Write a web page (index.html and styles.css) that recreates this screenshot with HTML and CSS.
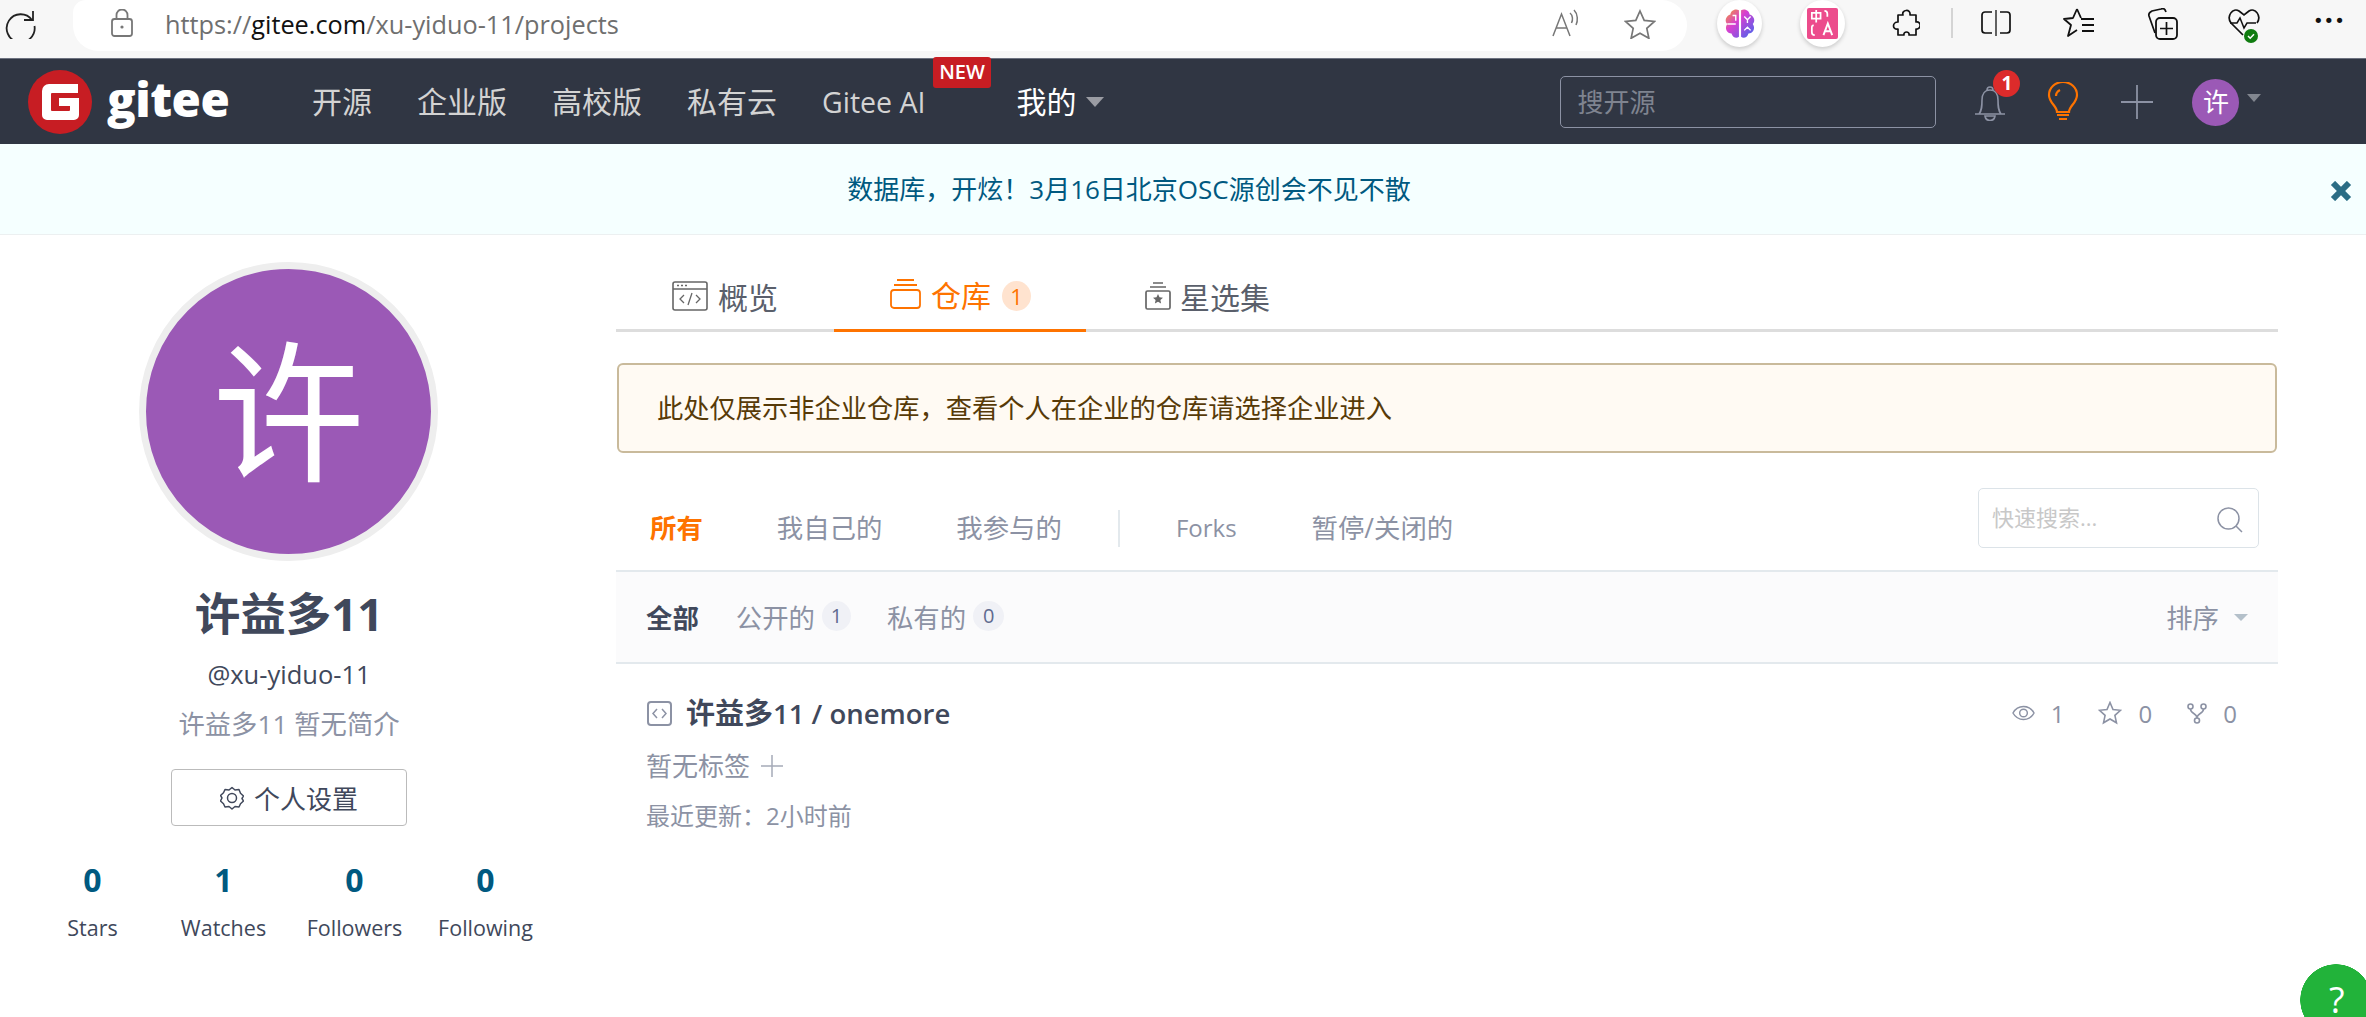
FILE: index.html
```html
<!DOCTYPE html>
<html lang="zh">
<head>
<meta charset="utf-8">
<title>gitee</title>
<link rel="stylesheet" href="styles.css">
</head>
<body>
<div class="chrome">
  <svg class="ci reload" viewBox="0 0 32 32"><path d="M28 4v9h-9M27 13A14 14 0 1 0 29.500 19" fill="none" stroke="#222" stroke-width="1.800"/></svg>
  <div class="urlbar">
    <svg class="lock" viewBox="0 0 22 28"><rect x="1" y="10" width="20" height="17" rx="2.5" fill="none" stroke="#777" stroke-width="1.8"/><path d="M5.500 10V6a5.500 5.500 0 0 1 11 0v4" fill="none" stroke="#777" stroke-width="1.800"/><circle cx="11" cy="18" r="1.600" fill="#777"/></svg>
    <div class="url">https://<b>gitee.com</b>/xu-yiduo-11/projects</div>
    <svg class="ci aloud" viewBox="0 0 30 28"><path d="M1 27 9.500 5 18 27M4.500 19h10M18 4c3 2.500 3 7 1.500 10M22 1c4 4 4 11 2 15" fill="none" stroke="#777" stroke-width="1.500"/></svg>
    <svg class="ci favstar" viewBox="0 0 32 30"><path d="M16 2l4.200 9.400 10.200 1.100-7.600 6.800 2.100 10-8.900-5.100-8.900 5.100 2.100-10-7.600-6.800 10.200-1.100z" fill="none" stroke="#777" stroke-width="1.700"/></svg>
  </div>
  <div class="ext-circle first">
    <svg viewBox="0 0 32 32" class="ext"><defs><linearGradient id="br" x1="0" y1="0" x2="1" y2="1"><stop offset="0" stop-color="#f59b30"/><stop offset=".4" stop-color="#d83fd0"/><stop offset="1" stop-color="#3f68f0"/></linearGradient></defs><path d="M15 3c-4-2-8 1-8 4-4 1-6 6-3 9-3 4 0 9 4 9 1 4 5 5 7 3zM17 3c4-2 8 1 8 4 4 1 6 6 3 9 3 4 0 9-4 9-1 4-5 5-7 3z" fill="url(#br)"/><path d="M4 16h8M20 9l3 3 3-3M23 12v3M20 22l3-3 3 3M9 8h3v5" fill="none" stroke="#fff" stroke-width="1.300"/></svg>
  </div>
  <div class="ext-circle second">
    <svg viewBox="0 0 32 32" class="ext"><rect width="32" height="32" rx="2" fill="#ec4c8c"/><path d="M5 5h9v6H5zM9.500 2v13M7 18c-2 0-2 1-2 3v4c0 2 1 3 3 3M18 3c2 0 3 1 3 3v3" fill="none" stroke="#fff" stroke-width="1.800"/><path d="M17 28l4.500-12L26 28M18.500 24h6" fill="none" stroke="#fff" stroke-width="2"/></svg>
  </div>
  <svg class="ci puzzle" viewBox="0 0 28 30"><path d="M6 7h5c-2-5 8-7 7 0h6v7c6-1 5 8 0 7v6h-7c1-4-6-4-5 0H6v-6c-6 1-6-7 0-7z" fill="none" stroke="#111" stroke-width="1.700" stroke-linejoin="round"/></svg>
  <span class="sep"></span>
  <svg class="ci split" viewBox="0 0 30 26"><path d="M11 2H4a3 3 0 0 0-3 3v15a3 3 0 0 0 3 3h7M19 2h7a3 3 0 0 1 3 3v15a3 3 0 0 1-3 3h-7" fill="none" stroke="#111" stroke-width="1.700"/><path d="M15 0v26" stroke="#111" stroke-width="1.300"/></svg>
  <svg class="ci favs" viewBox="0 0 32 30"><path d="M14 1l4 9h-0M14 1l-4 9-9 1 7 6-3 11 9-6" fill="none" stroke="#111" stroke-width="1.800" stroke-linejoin="round"/><path d="M18 11h13M19 17h12M19 23h12" stroke="#111" stroke-width="1.800"/></svg>
  <svg class="ci coll" viewBox="0 0 32 32"><path d="M9 25 3 8c-1-3 1-4 3-5l9-2c3-1 4 0 5 3" fill="none" stroke="#111" stroke-width="1.700"/><rect x="10" y="10" width="21" height="21" rx="4" fill="none" stroke="#111" stroke-width="1.800"/><path d="M20.500 14v13M14 20.500h13" stroke="#111" stroke-width="1.700"/></svg>
  <svg class="ci heart" viewBox="0 0 32 36"><path d="M15 27 3 15C-2 8 5-1 11 3l5 4 5-4c6-4 13 5 8 12" fill="none" stroke="#111" stroke-width="1.700"/><path d="M2 15h7l3-5 4 10 3-5h9" fill="none" stroke="#111" stroke-width="1.500"/><circle cx="23" cy="28" r="7" fill="#107c10"/><path d="M20 28l2.200 2.200 3.800-4" fill="none" stroke="#fff" stroke-width="1.500"/></svg>
  <div class="dots">&#8226;&#8226;&#8226;</div>
</div>

<header class="nav">
  <svg class="logo-mark" viewBox="0 0 64 64"><circle cx="32" cy="32" r="32" fill="#c71d23"/><path d="M14 21a7 7 0 0 1 7-7h29v9H24a1 1 0 0 0-1 1v16a1 1 0 0 0 1 1h17a1 1 0 0 0 1-1v-4H31v-8h20v17a5 5 0 0 1-5 5H19a5 5 0 0 1-5-5z" fill="#fff"/></svg>
  <span class="logo-text">gitee</span>
  <nav class="links">
    <a>开源</a>
    <a>企业版</a>
    <a>高校版</a>
    <a>私有云</a>
    <a class="ai">Gitee AI<span class="new">NEW</span></a>
    <a class="mine">我的<i class="caret"></i></a>
  </nav>
  <div class="nav-search">搜开源</div>
  <div class="bell">
    <svg viewBox="0 0 32 38"><path d="M1 31h30M5 31c3-4 3-8 3-14 0-6 3-10 8-10s8 4 8 10c0 6 0 10 3 14M13 7c0-4 6-4 6 0M11 33c1 6 9 6 10 0z" fill="none" stroke="#8c92a4" stroke-width="1.600"/></svg>
    <span class="bell-badge">1</span>
  </div>
  <svg class="bulb" viewBox="0 0 32 40"><path d="M10 30c0-6-8-9-8-17a14 13 0 0 1 28 0c0 8-8 11-8 17z" fill="none" stroke="#fe7300" stroke-width="2.200"/><path d="M9 14c0-3 2-5 4-6M10 33h12M12 37h8" fill="none" stroke="#fe7300" stroke-width="2.200"/></svg>
  <svg class="nav-plus" viewBox="0 0 32 34"><path d="M0 17h32M16 0v34" stroke="#8c92a4" stroke-width="1.800"/></svg>
  <div class="nav-avatar">许</div>
  <i class="caret small"></i>
</header>

<div class="banner">
  <span class="banner-text">数据库，开炫！3月16日北京OSC源创会不见不散</span>
  <svg class="banner-close" viewBox="0 0 24 20"><path d="M4 2l16 16M20 2 4 18" stroke="#2b6d85" stroke-width="6"/></svg>
</div>

<div class="page">
  <aside class="side">
    <div class="avatar">许</div>
    <h1 class="name">许益多11</h1>
    <div class="handle">@xu-yiduo-11</div>
    <div class="bio">许益多11 暂无简介</div>
    <button class="settings">
      <svg viewBox="0 0 24 24"><path d="M12 1.500l3 2.500 4-.5 1.500 3.700 3 2.800-1.500 2.500 1.500 2.500-3 2.800-1.500 3.200-4-.5-3 2.500-3-2.500-4 .5-1.500-3.200-3-2.800L2 12 .5 9.500l3-2.800L5 3.500l4 .5z" fill="none" stroke="#40485b" stroke-width="1.500" stroke-linejoin="round"/><circle cx="12" cy="12" r="4.500" fill="none" stroke="#40485b" stroke-width="1.500"/></svg>
      个人设置
    </button>
    <div class="stats">
      <div class="stat"><b>0</b><span>Stars</span></div>
      <div class="stat"><b>1</b><span>Watches</span></div>
      <div class="stat"><b>0</b><span>Followers</span></div>
      <div class="stat"><b>0</b><span>Following</span></div>
    </div>
  </aside>

  <main class="main">
    <div class="tabs">
      <a class="tab t1">
        <svg class="ti1" viewBox="0 0 36 30"><rect x="1" y="1" width="34" height="28" rx="2" fill="none" stroke="#666" stroke-width="1.600"/><path d="M1 8h34" stroke="#666" stroke-width="1.400"/><path d="M5 4.500h2M9 4.500h2M13 4.500h2" stroke="#666" stroke-width="1.600"/><path d="M12 14l-4 4 4 4M24 14l4 4-4 4M20 12l-4 12" fill="none" stroke="#666" stroke-width="1.300"/></svg>
        概览
      </a>
      <a class="tab t2 active">
        <svg class="ti2" viewBox="0 0 31 30"><path d="M7 1h17M4 6h23" stroke="#fe7300" stroke-width="1.800"/><rect x="1" y="11" width="29" height="18" rx="3" fill="none" stroke="#fe7300" stroke-width="1.800"/></svg>
        仓库
        <span class="tab-badge">1</span>
      </a>
      <a class="tab t3">
        <svg class="ti3" viewBox="0 0 26 28"><path d="M8 1h10M5 5h16" stroke="#666" stroke-width="1.600"/><rect x="1" y="9" width="24" height="18" rx="1.500" fill="none" stroke="#666" stroke-width="1.700"/><path d="M13 12l1.500 3.300 3.500.4-2.600 2.400.7 3.500-3.100-1.800-3.100 1.800.7-3.500L8 15.700l3.500-.4z" fill="#666"/></svg>
        星选集
      </a>
    </div>

    <div class="notice">此处仅展示非企业仓库，查看个人在企业的仓库请选择企业进入</div>

    <div class="subnav">
      <div class="sublinks">
        <a class="on">所有</a>
        <a>我自己的</a>
        <a>我参与的</a>
        <span class="divider"></span>
        <a class="forks">Forks</a>
        <a>暂停/关闭的</a>
      </div>
      <div class="quick">
        <span>快速搜索...</span>
        <svg viewBox="0 0 26 26"><circle cx="11.500" cy="11.500" r="10.500" fill="none" stroke="#8c92a4" stroke-width="1.500"/><path d="M19 19l6 6" stroke="#8c92a4" stroke-width="1.500"/></svg>
      </div>
    </div>

    <div class="bar">
      <a class="all">全部</a>
      <a class="filter">公开的<span class="pill">1</span></a>
      <a class="filter">私有的<span class="pill wide">0</span></a>
      <div class="sort">排序<i class="sort-caret"></i></div>
    </div>

    <article class="repo">
      <div class="repo-head">
        <svg class="repo-icon" viewBox="0 0 25 25"><rect x="1" y="1" width="23" height="23" rx="3" fill="none" stroke="#8c92a4" stroke-width="2"/><path d="M10 8l-4 4.500 4 4.500M15 8l4 4.500-4 4.500" fill="none" stroke="#8c92a4" stroke-width="1.500"/></svg>
        <h2 class="repo-name"><b>许益多</b>11 / onemore</h2>
        <div class="repo-stats">
          <svg class="rs-eye" viewBox="0 0 24 16"><path d="M1 8c5-9 17-9 22 0-5 9-17 9-22 0z" fill="none" stroke="#8c92a4" stroke-width="1.500"/><circle cx="12" cy="8" r="4" fill="none" stroke="#8c92a4" stroke-width="1.500"/></svg>
          <span class="rs-n1">1</span>
          <svg class="rs-star" viewBox="0 0 24 24"><path d="M12 1.500l3 7 7.500.8-5.600 5 1.600 7.500-6.500-3.800-6.500 3.800 1.600-7.500-5.600-5 7.500-.8z" fill="none" stroke="#8c92a4" stroke-width="1.600"/></svg>
          <span class="rs-n2">0</span>
          <svg class="rs-fork" viewBox="0 0 20 21"><circle cx="3.500" cy="3.500" r="2.500" fill="none" stroke="#8c92a4" stroke-width="1.600"/><circle cx="16.500" cy="3.500" r="2.500" fill="none" stroke="#8c92a4" stroke-width="1.600"/><circle cx="10" cy="17.500" r="2.500" fill="none" stroke="#8c92a4" stroke-width="1.600"/><path d="M3.500 6c0 5 6.500 4 6.500 9M16.500 6c0 5-6.500 4-6.500 9" fill="none" stroke="#8c92a4" stroke-width="1.600"/></svg>
          <span class="rs-n3">0</span>
        </div>
      </div>
      <div class="repo-tags">暂无标签<svg viewBox="0 0 22 22"><path d="M0 11h22M11 0v22" stroke="#a5aab8" stroke-width="1.500"/></svg></div>
      <div class="repo-time">最近更新：2小时前</div>
    </article>
  </main>
</div>

<div class="help"><span class="help-mark">?</span></div>
</body>
</html>
```

FILE: styles.css
```css
* { box-sizing: border-box; }
html, body { margin: 0; padding: 0; height: 1017px; overflow: hidden; background: #fff; }
body { position: relative; font-family: "Open Sans", "Noto Sans CJK SC", sans-serif; color: #40485b; }
a { display: block; }
h1, h2 { margin: 0; }
svg { display: block; flex: none; }

/* browser toolbar */
.chrome { height: 58px; background: #f7f7f7; display: flex; align-items: flex-start; position: relative; }
.ci { position: relative; }
.reload { width: 32px; height: 32px; margin: 7px 0 0 5px; }
.urlbar { margin-left: 36px; width: 1614px; height: 51px; background: #fff; border-radius: 14px 28px 28px 28px; display: flex; align-items: center; padding-left: 38px; }
.lock { width: 22px; height: 28px; margin-top: -6px; }
.url { margin-left: 32px; margin-top: -3px; font-size: 25.3px; line-height: 34px; color: #6f6f6f; width: 1000px; white-space: nowrap; }
.url b { font-weight: 400; color: #111; }
.aloud { width: 30px; height: 28px; margin-left: 387px; margin-top: -6px; }
.favstar { width: 32px; height: 30px; margin-left: 42px; margin-top: -4px; }
.ext-circle { width: 45px; height: 47px; background: #fff; border-radius: 50%; box-shadow: 0 2px 4px rgba(0,0,0,.18); display: flex; align-items: center; justify-content: center; margin-top: 0; }
.ext-circle.first { margin-left: 30px; }
.ext-circle.second { margin-left: 38px; }
.ext { width: 31px; height: 31px; }
.first .ext { width: 34px; height: 34px; }
.puzzle { width: 28px; height: 30px; margin: 8px 0 0 47px; }
.sep { width: 2px; height: 30px; background: #d4d4d4; margin: 8px 0 0 31px; }
.split { width: 30px; height: 26px; margin: 10px 0 0 28px; }
.favs { width: 32px; height: 30px; margin: 8px 0 0 52px; }
.coll { width: 32px; height: 32px; margin: 8px 0 0 51px; }
.heart { width: 32px; height: 36px; margin: 8px 0 0 50px; }
.dots { margin: 6px 0 0 53px; font-size: 18px; line-height: 30px; letter-spacing: 0; color: #111; font-family: "DejaVu Sans", sans-serif; width: 30px; white-space: nowrap; }

/* site navigation */
.nav { height: 86px; background: #303643; border-top: 1px solid #6d7280; display: flex; align-items: center; padding-left: 28px; }
.logo-mark { width: 64px; height: 64px; }
.logo-text { margin-left: 15px; font-size: 47.5px; line-height: 60px; font-weight: 800; color: #fff; font-family: "Open Sans", sans-serif; letter-spacing: -.5px; margin-top: -6px; width: 124px; }
.links { display: flex; align-items: center; margin-left: 81px; gap: 45px; font-size: 30px; line-height: 40px; color: #d3d3d3; margin-top: 1px; }
.ai { position: relative; font-size: 28.5px; margin-right: 46px; white-space: nowrap; }
.new { position: absolute; left: 111px; top: -25px; width: 58px; height: 31px; background: #c71d23; color: #fff; font-size: 20px; line-height: 30px; font-weight: 600; text-align: center; border-radius: 3px; }
.mine { color: #fff; display: flex; align-items: center; }
.caret { display: block; width: 0; height: 0; border-left: 9px solid transparent; border-right: 9px solid transparent; border-top: 10px solid #9a9ca3; margin-left: 10px; }
.links a:not(.mine):not(.ai) { white-space: nowrap; }
.nav-search { margin-left: 456px; width: 376px; height: 52px; border: 1px solid #8c92a4; border-radius: 5px; font-size: 26px; line-height: 50px; padding-left: 16px; color: #7f8490; margin-top: 1px; }
.bell { position: relative; width: 32px; height: 38px; margin-left: 38px; }
.bell svg { width: 32px; height: 38px; }
.bell-badge { position: absolute; left: 19px; top: -13px; width: 27px; height: 27px; border-radius: 50%; background: #dc2b2b; color: #fff; font-size: 19px; line-height: 27px; font-weight: 700; text-align: center; }
.bulb { width: 32px; height: 40px; margin-left: 41px; }
.nav-plus { width: 32px; height: 34px; margin-left: 42px; }
.nav-avatar { width: 47px; height: 47px; border-radius: 50%; background: #9b59b6; color: #fff; font-size: 26px; line-height: 46px; text-align: center; margin-left: 39px; margin-top: 2px; }
.caret.small { border-left-width: 7px; border-right-width: 7px; border-top-width: 8px; margin-left: 8px; margin-top: -7px; border-top-color: #81868f; }

/* announcement */
.banner { height: 91px; background: #f5ffff; border-bottom: 1px solid #ecf0f1; display: flex; align-items: center; justify-content: center; position: relative; padding-right: 108px; }
.banner-text { font-size: 26px; color: #005980; line-height: 36px; }
.banner-close { position: absolute; right: 13px; top: 37px; width: 24px; height: 20px; }

/* page */
.page { display: flex; padding: 0 88px 0 27px; }
.side { width: 524px; padding-top: 27px; display: flex; flex-direction: column; align-items: center; }
.avatar { width: 299px; height: 299px; border-radius: 50%; background: #9b59b6; border: 7px solid #eee; color: #fff; font-size: 152px; line-height: 285px; text-align: center; margin-left: -1px; }
.name { margin-top: 22px; font-size: 45.5px; line-height: 60px; font-weight: 700; color: #40485b; }
.handle { margin-top: 13px; font-size: 25.5px; line-height: 36px; color: #40485b; }
.bio { margin-top: 14px; font-size: 26.3px; line-height: 36px; color: #8c92a4; }
.settings { margin-top: 27px; width: 236px; height: 57px; background: #fff; border: 1px solid #bbb; border-radius: 4px; font: inherit; font-size: 26px; color: #40485b; display: flex; align-items: center; justify-content: center; gap: 10px; padding: 0; }
.settings svg { width: 24px; height: 24px; }
.stats { margin-top: 34px; width: 524px; display: grid; grid-template-columns: repeat(4, 131px); }
.stat { display: flex; flex-direction: column; align-items: center; }
.stat b { font-size: 32px; line-height: 40px; color: #005980; font-weight: 700; }
.stat span { margin-top: 12px; font-size: 21.5px; line-height: 32px; color: #40485b; }

.main { flex: 1; margin-left: 65px; min-width: 0; }
.tabs { margin-top: 27px; height: 70px; border-bottom: 3px solid #ddd; display: flex; }
.tab { height: 70px; display: flex; align-items: center; font-size: 30px; color: #5a5f6b; padding-bottom: 3px; }
.t1 { width: 218px; padding-left: 56px; gap: 10px; }
.t2 { width: 252px; padding-left: 56px; gap: 10px; color: #fe7300; border-bottom: 3px solid #fe7300; }
.t3 { padding-left: 59px; gap: 9px; }
.ti1 { width: 36px; height: 30px; }
.ti2 { width: 31px; height: 30px; }
.ti3 { width: 26px; height: 28px; }
.tab-badge { width: 29px; height: 30px; border-radius: 50%; background: #ffe3cf; font-size: 22px; line-height: 30px; text-align: center; margin-left: 1px; margin-top: 3px; }

.notice { margin: 31px 1px 0; height: 90px; border: 2px solid #c9ba9b; border-radius: 6px; background: #fffaf3; color: #573a08; font-size: 26.25px; line-height: 86px; padding-left: 38px; }

.subnav { height: 117px; display: flex; align-items: flex-start; padding: 35px 19px 0 34px; justify-content: space-between; }
.sublinks { display: flex; align-items: center; gap: 74px; font-size: 26.4px; line-height: 40px; color: #8c92a4; margin-top: 20px; }
.sublinks .on { color: #fe7300; font-weight: 700; }
.sublinks .forks { font-size: 24px; margin-right: 1px; }
.divider { width: 2px; height: 37px; background: #e3e9ed; margin: 0 -18px; }
.quick { width: 281px; height: 60px; border: 1px solid #dce3e8; border-radius: 5px; display: flex; align-items: center; justify-content: space-between; padding: 0 15px 0 13px; }
.quick span { font-size: 22px; color: #c8c8c8; line-height: 34px; margin-top: -2px; }
.quick svg { width: 26px; height: 26px; margin-top: 4px; }

.bar { height: 94px; border-top: 2px solid #e3e9ed; border-bottom: 2px solid #e3e9ed; background: #fbfbfc; display: flex; align-items: center; padding: 0 30px 2px 30px; font-size: 26.4px; color: #8c92a4; }
.all { color: #40485b; font-weight: 700; margin-right: 37px; }
.filter { display: flex; align-items: center; margin-right: 36px; }
.pill { width: 29px; height: 30px; border-radius: 50%; background: #f0f1f6; color: #5f6b90; font-size: 20px; line-height: 30px; text-align: center; margin-left: 7px; }
.pill.wide { width: 31px; }
.sort { margin-left: auto; display: flex; align-items: center; }
.sort-caret { display: block; width: 0; height: 0; border-left: 7px solid transparent; border-right: 7px solid transparent; border-top: 7px solid #b4c0ca; margin-left: 15px; margin-top: 2px; }

.repo { padding: 29px 41px 0 30px; }
.repo-head { display: flex; align-items: center; height: 40px; }
.repo-icon { width: 25px; height: 25px; margin-left: 1px; }
.repo-name { margin-left: 14px; font-size: 27.5px; line-height: 40px; font-weight: 600; color: #40485b; }
.repo-name b { font-weight: 700; font-size: 29px; }
.repo-stats { margin-left: auto; display: flex; align-items: center; font-size: 24px; color: #8c92a4; }
.rs-eye { width: 23px; height: 16px; }
.rs-n1 { margin-left: 16px; }
.rs-star { width: 24px; height: 24px; margin-left: 33px; }
.rs-n2 { margin-left: 17px; }
.rs-fork { width: 20px; height: 21px; margin-left: 35px; }
.rs-n3 { margin-left: 16px; }
.repo-tags { margin-top: 15px; display: flex; align-items: center; gap: 11px; font-size: 26px; line-height: 36px; color: #8c92a4; }
.repo-tags svg { width: 22px; height: 22px; }
.repo-time { margin-top: 16px; font-size: 24px; line-height: 32px; color: #8c92a4; }

/* floating help button, its circle running past the window edge */
.help { position: absolute; left: 2300px; top: 964px; width: 66px; height: 53px; background: radial-gradient(circle 36px at 36px 36px, #22b33a 35.5px, transparent 36px); padding: 19px 0 0 29px; }
.help-mark { display: block; color: #fff; font-size: 36px; line-height: 34px; }
```
